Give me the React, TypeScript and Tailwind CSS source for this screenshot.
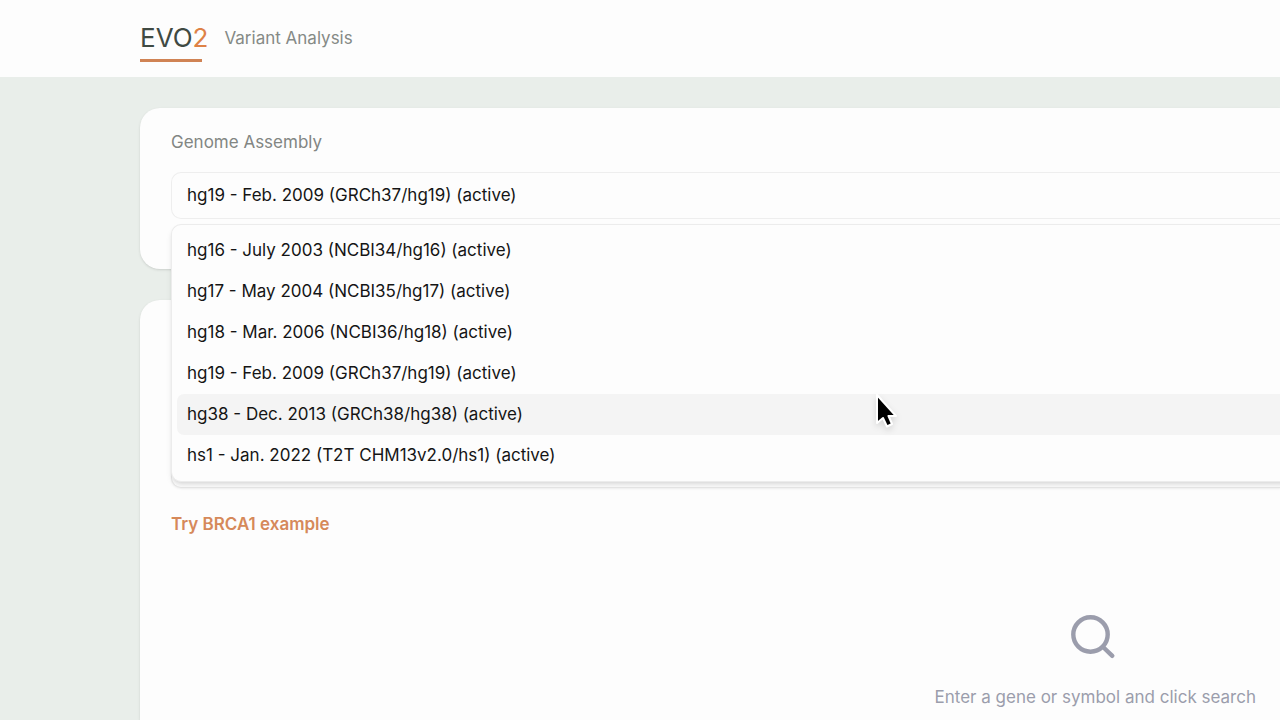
import { useState } from "react";
import { clsx } from "clsx";

const assemblies = [
  { id: "hg16", name: "July 2003 (NCBI34/hg16)" },
  { id: "hg17", name: "May 2004 (NCBI35/hg17)" },
  { id: "hg18", name: "Mar. 2006 (NCBI36/hg18)" },
  { id: "hg19", name: "Feb. 2009 (GRCh37/hg19)" },
  { id: "hg38", name: "Dec. 2013 (GRCh38/hg38)" },
  { id: "hs1", name: "Jan. 2022 (T2T CHM13v2.0/hs1)" },
];

function Header() {
  return (
    <header className="flex items-center gap-4 bg-[#fdfdfd] pt-[22px] pb-[23px] pl-[140px]">
      <h1 className="relative text-[26px] leading-8 text-[#3f4a43]">
        EVO<span className="text-[#de8246]">2</span>
        <span className="absolute -bottom-2 left-0 h-[3px] w-[62px] bg-[#d08354]" />
      </h1>
      <span className="text-[17px] leading-7 text-[#858a86]">Variant Analysis</span>
    </header>
  );
}

function AssemblyPicker() {
  const [selected, setSelected] = useState("hg19");
  const [highlighted, setHighlighted] = useState("hg38");

  return (
    <section className="rounded-l-[20px] bg-[#fdfdfd] pt-5 pb-[50px] pl-[31px] shadow-sm">
      <label htmlFor="assembly" className="block text-[17px] leading-7 text-[#828683]">
        Genome Assembly
      </label>
      <div className="relative mt-4">
        <select
          id="assembly"
          value={selected}
          onChange={(e) => setSelected(e.target.value)}
          className="block h-[47px] w-full appearance-none rounded-l-[10px] border border-r-0 border-[#eeeeee] bg-[#fdfdfd] px-[15px] text-[17px] text-[#151515] outline-none"
        >
          {assemblies.map((a) => (
            <option key={a.id} value={a.id}>
              {a.id} - {a.name} (active)
            </option>
          ))}
        </select>

        <ul className="absolute top-full -right-4 left-0 z-10 mt-[5px] rounded-l-[10px] border border-r-0 border-[#ececec] bg-[#fdfdfd] py-[5px] pl-[5px] shadow-md">
          {assemblies.map((a) => (
            <li key={a.id}>
              <button
                type="button"
                onClick={() => setSelected(a.id)}
                onMouseEnter={() => setHighlighted(a.id)}
                className={clsx(
                  "block h-[41px] w-full rounded-l-[7px] pl-[10px] text-left text-[17px] text-[#151515]",
                  a.id === highlighted && "bg-[#f4f4f4]"
                )}
              >
                {a.id} - {a.name} (active)
              </button>
            </li>
          ))}
        </ul>
      </div>
    </section>
  );
}

function GeneSearch() {
  return (
    <section className="flex grow flex-col rounded-tl-[20px] bg-[#fdfdfd] pt-[141px] pl-[31px] shadow-sm">
      <input
        aria-label="Gene or symbol"
        className="h-[47px] w-full rounded-l-[10px] border border-r-0 border-[#e8e8e8] bg-[#fdfdfd] px-4 text-[17px] shadow-xs"
      />
      <div className="mt-[22px]">
        <a href="#brca1" className="text-[17px] leading-7 font-semibold text-[#d6895a]">
          Try BRCA1 example
        </a>
      </div>

      <div className="mt-[74px] flex justify-end pr-6">
        <div className="flex flex-col items-center gap-[23px] text-[#9b9dac]">
          <svg viewBox="0 0 48 48" className="size-12" fill="none" stroke="currentColor" strokeWidth="4.400" strokeLinecap="round">
            <circle cx="19.500" cy="22.500" r="17.200" />
            <path d="M32 35 41.300 43.800" />
          </svg>
          <p className="text-[17px] leading-7">Enter a gene or symbol and click search</p>
        </div>
      </div>
    </section>
  );
}

function Cursor() {
  return (
    <svg
      viewBox="0 0 24 38"
      className="pointer-events-none absolute top-[392px] left-[873px] z-20 h-[38px] w-6 drop-shadow-md"
    >
      <path
        d="M4 3V31L10 26 14 34.500 19 32 15.500 24H23Z"
        fill="#000"
        stroke="#fff"
        strokeWidth="2"
        strokeLinejoin="round"
      />
    </svg>
  );
}

export default function App() {
  return (
    <div className="relative flex min-h-screen flex-col overflow-hidden bg-[#e9eeea] font-['Inter','Liberation_Sans',sans-serif]">
      <Header />
      <main className="flex grow flex-col gap-[31px] pt-[31px] pl-[140px]">
        <AssemblyPicker />
        <GeneSearch />
      </main>
      <Cursor />
    </div>
  );
}
